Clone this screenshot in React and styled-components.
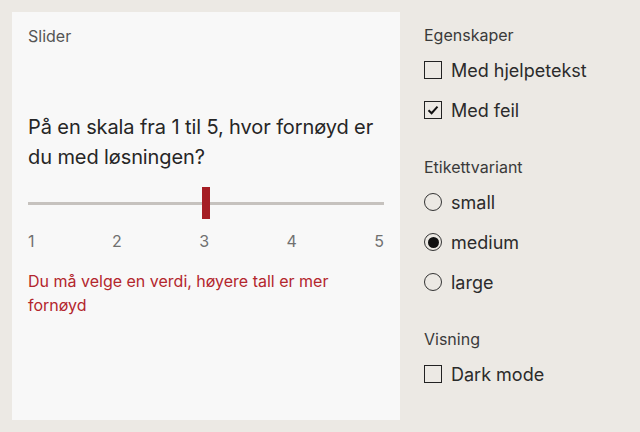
import React from "react";
import styled, { createGlobalStyle } from "styled-components";

const Global = createGlobalStyle`
  html, body { margin: 0; padding: 0; background: #ece9e4; }
  body { font-family: Inter, "Noto Sans", sans-serif; color: #2b2b2b; }
`;

const Page = styled.div`
  display: flex;
  gap: 24px;
  padding: 12px;
  width: 640px;
  height: 432px;
  box-sizing: border-box;
`;

const Card = styled.section`
  width: 388px;
  height: 408px;
  box-sizing: border-box;
  background: #f8f8f8;
  padding: 14px 16px;
  display: flex;
  flex-direction: column;
`;

const CardTitle = styled.div`
  font-size: 16px;
  color: #555;
  line-height: 20px;
`;

const Question = styled.div`
  margin-top: 66px;
  font-size: 20px;
  line-height: 30px;
  color: #262626;
  letter-spacing: -0.1px;
`;

const Track = styled.div`
  position: relative;
  margin-top: 15px;
  height: 32px;
  display: flex;
  align-items: center;
`;

const Rail = styled.div`
  width: 100%;
  height: 3px;
  background: #c6c2be;
`;

const Thumb = styled.div`
  position: absolute;
  left: 174px;
  top: 0;
  width: 8px;
  height: 32px;
  background: #a51d24;
`;

const Ticks = styled.div`
  display: flex;
  justify-content: space-between;
  margin-top: 10px;
  font-size: 16px;
  line-height: 24px;
  color: #707070;
`;

const ErrorText = styled.div`
  margin-top: 16px;
  font-size: 16px;
  line-height: 24px;
  color: #b3262d;
  padding-right: 50px;
`;

const Side = styled.aside`
  display: flex;
  flex-direction: column;
  padding-top: 12px;
`;

const Group = styled.div`
  display: flex;
  flex-direction: column;
  margin-bottom: 26px;
`;

const GroupTitle = styled.div`
  font-size: 16px;
  line-height: 22px;
  color: #3a3a3a;
  margin-bottom: 4px;
`;

const Option = styled.label`
  display: flex;
  align-items: center;
  gap: 9px;
  height: 40px;
  font-size: 18px;
  color: #2b2b2b;
`;

const Box = styled.span`
  width: 18px;
  height: 18px;
  box-sizing: border-box;
  border: 1.5px solid #222;
  display: flex;
  align-items: center;
  justify-content: center;
  flex: none;
`;

const Radio = styled.span`
  width: 18px;
  height: 18px;
  box-sizing: border-box;
  border: 1.5px solid #333;
  border-radius: 50%;
  display: flex;
  align-items: center;
  justify-content: center;
  flex: none;
  &::after {
    content: "";
    width: 11px;
    height: 11px;
    border-radius: 50%;
    background: #111;
    display: ${(p) => (p.$on ? "block" : "none")};
  }
`;

const Check = () => (
  <svg width="12" height="12" viewBox="0 0 12 12">
    <path d="M1.5 6.2 L4.6 9.2 L10.5 2.6" fill="none" stroke="#111" strokeWidth="2" />
  </svg>
);

export default function App() {
  return (
    <>
      <Global />
      <Page>
        <Card>
          <CardTitle>Slider</CardTitle>
          <Question>På en skala fra 1 til 5, hvor fornøyd er du med løsningen?</Question>
          <Track>
            <Rail />
            <Thumb />
          </Track>
          <Ticks>
            <span>1</span><span>2</span><span>3</span><span>4</span><span>5</span>
          </Ticks>
          <ErrorText>Du må velge en verdi, høyere tall er mer fornøyd</ErrorText>
        </Card>
        <Side>
          <Group>
            <GroupTitle>Egenskaper</GroupTitle>
            <Option><Box /> Med hjelpetekst</Option>
            <Option><Box><Check /></Box> Med feil</Option>
          </Group>
          <Group>
            <GroupTitle>Etikettvariant</GroupTitle>
            <Option><Radio /> small</Option>
            <Option><Radio $on /> medium</Option>
            <Option><Radio /> large</Option>
          </Group>
          <Group>
            <GroupTitle>Visning</GroupTitle>
            <Option><Box /> Dark mode</Option>
          </Group>
        </Side>
      </Page>
    </>
  );
}
